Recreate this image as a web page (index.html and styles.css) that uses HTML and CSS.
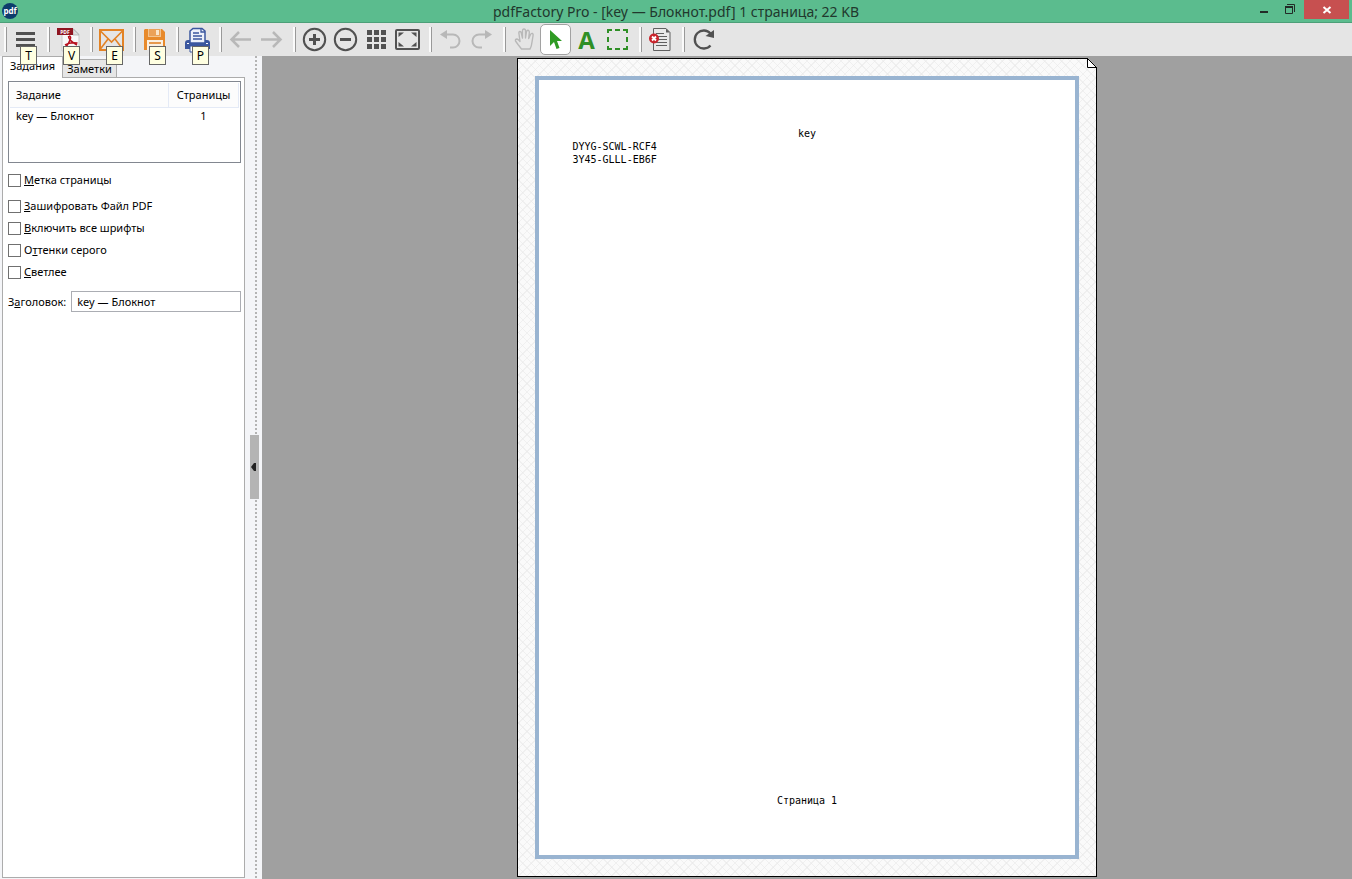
FILE: index.html
```
<!DOCTYPE html>
<html lang="ru">
<head>
<meta charset="utf-8">
<title>pdfFactory Pro</title>
<link rel="stylesheet" href="styles.css">
</head>
<body>
<div class="app">
  <header class="titlebar">
    <div class="app-logo">
      <svg width="18" height="18" viewBox="0 0 18 18"><circle cx="9" cy="9" r="8" fill="#0d3c6b"/><text class="logo-text" x="9" y="12" text-anchor="middle">pdf</text></svg>
    </div>
    <h1 class="title">pdfFactory Pro - [key — Блокнот.pdf] 1 страница; 22 KB</h1>
    <div class="window-controls">
      <button class="win-btn" aria-label="Свернуть"><svg width="10" height="16"><rect x="0" y="9" width="8" height="2" fill="#222b27"/></svg></button>
      <button class="win-btn" aria-label="Восстановить"><svg width="12" height="16" fill="none" stroke="#222b27"><path d="M2 2.500H9.500V10"/><path d="M.5 4V11.500H7.500V5"/><path d="M0 5H8" stroke-width="2"/></svg></button>
      <button class="win-btn win-close" aria-label="Закрыть"><svg width="10" height="10" stroke="#fff" stroke-width="2"><path d="M1.500 2L8.500 8M8.500 2L1.500 8"/></svg></button>
    </div>
  </header>

  <nav class="toolbar">
    <div class="group">
      <button class="tool" aria-label="Меню"><svg width="27" height="27" viewBox="0 0 27 27" fill="#515151"><path d="M4 6h19v3H4zM4 12h19v3H4zM4 18h19v3H4z"/></svg><span class="keytip">T</span></button>
    </div>
    <div class="group">
      <button class="tool" aria-label="PDF"><svg width="27" height="27" viewBox="0 0 27 27"><path d="M7 3H19L24 8V25H7Z" fill="#f8f8f8" stroke="#c9c9c9"/><path d="M18 3V9H24Z" fill="#ddd" stroke="#aaa" stroke-width=".7"/><path d="M2 2H18V9H2Z" fill="#8f1520"/><text class="pdf-text" x="10" y="8" text-anchor="middle">PDF</text><path d="M14 10Q17 10 14.500 15Q12 21 9 22M13.500 10Q13 14 22 19M10 19Q15 16 22.500 17" fill="none" stroke="#b8121f" stroke-width="1.500"/></svg><span class="keytip">V</span></button>
    </div>
    <div class="group">
      <button class="tool" aria-label="Почта"><svg width="27" height="27" viewBox="0 0 27 27" fill="none" stroke="#e38325" stroke-width="2"><rect x="2" y="4" width="23" height="20"/><path d="M2 4.500L13.500 16L25 4.500M2 23.500L10 13M25 23.500L17 13" stroke-width="1.600"/></svg><span class="keytip">E</span></button>
    </div>
    <div class="group">
      <button class="tool" aria-label="Сохранить"><svg width="27" height="27" viewBox="0 0 27 27"><path d="M4 3H21L24 6V24H3V4Z" fill="#e88a2b"/><path d="M7 3H20V11H7Z" fill="#f2c48f"/><path d="M8 3H19V10H8Z" fill="#eba158"/><path d="M15 4H18V9H15Z" fill="#fbe5ca"/><path d="M6 14H22V24H6Z" fill="#faf0e2"/><path d="M8 17H20M8 21H20" stroke="#e07c1d" stroke-width="1.500"/></svg><span class="keytip">S</span></button>
    </div>
    <div class="group">
      <button class="tool" aria-label="Печать"><svg width="27" height="27" viewBox="0 0 27 27"><path d="M1 17Q1 14 4 14H23Q26 14 26 17V23H1Z" fill="#3b579f"/><path d="M6 17V5L9 2.500H18L21 5V17Z" fill="#edf1fa" stroke="#3b579f" stroke-width="1.500"/><path d="M17 2V6H21M9 7H15M9 10H18M9 13H18" fill="none" stroke="#3b579f" stroke-width="1.300"/><path d="M6 20H21V26H6Z" fill="#fff" stroke="#3b579f"/><path d="M3 17.500H5M22 17.500H24" stroke="#fff"/></svg><span class="keytip">P</span></button>
    </div>
    <div class="group">
      <button class="tool" aria-label="Назад"><svg width="27" height="27" viewBox="0 0 27 27" fill="none" stroke="#b8b8b8" stroke-width="2.500"><path d="M4 13.500H24M12 6L4.500 13.500L12 21"/></svg></button>
      <button class="tool" aria-label="Вперёд"><svg width="27" height="27" viewBox="0 0 27 27" fill="none" stroke="#b8b8b8" stroke-width="2.500"><path d="M3 13.500H23M15 6L22.500 13.500L15 21"/></svg></button>
    </div>
    <div class="group">
      <button class="tool" aria-label="Увеличить"><svg width="27" height="27" viewBox="0 0 27 27" fill="none" stroke="#515151"><circle cx="13.500" cy="13.500" r="10.700" stroke-width="2"/><path d="M8 13.500H19M13.500 8V19" stroke-width="3"/></svg></button>
      <button class="tool" aria-label="Уменьшить"><svg width="27" height="27" viewBox="0 0 27 27" fill="none" stroke="#515151"><circle cx="13.500" cy="13.500" r="10.700" stroke-width="2"/><path d="M8 13.500H19" stroke-width="3"/></svg></button>
      <button class="tool" aria-label="Эскизы"><svg width="27" height="27" viewBox="0 0 27 27" fill="#515151"><path d="M4 4h5v5H4zM11 4h5v5h-5zM18 4h5v5h-5zM4 11h5v5H4zM11 11h5v5h-5zM18 11h5v5h-5zM4 18h5v5H4zM11 18h5v5h-5zM18 18h5v5h-5z"/></svg></button>
      <button class="tool" aria-label="По размеру окна"><svg width="27" height="27" viewBox="0 0 27 27"><rect x="2" y="4" width="23" height="19" rx="1" fill="none" stroke="#515151" stroke-width="2"/><path d="M4.500 6.500H10L4.500 11ZM22.500 6.500H17L22.500 11ZM4.500 20.500H10L4.500 16ZM22.500 20.500H17L22.500 16Z" fill="#515151"/></svg></button>
    </div>
    <div class="group">
      <button class="tool" aria-label="Отменить"><svg width="27" height="27" viewBox="0 0 27 27"><path d="M8 8.500H16A6.500 6.500 0 0 1 16 21.500H13" fill="none" stroke="#b8b8b8" stroke-width="2"/><path d="M3 8.500L10 4V13Z" fill="#b8b8b8"/></svg></button>
      <button class="tool" aria-label="Повторить"><svg width="27" height="27" viewBox="0 0 27 27"><path d="M19 8.500H11A6.500 6.500 0 0 0 11 21.500H14" fill="none" stroke="#b8b8b8" stroke-width="2"/><path d="M24 8.500L17 4V13Z" fill="#b8b8b8"/></svg></button>
    </div>
    <div class="group">
      <button class="tool" aria-label="Рука"><svg width="27" height="27" viewBox="0 0 27 27" fill="none" stroke="#b8b8b8" stroke-width="1.400" stroke-linejoin="round"><path d="M9 15.500L8 8Q7.500 5.500 9 5.500Q10.200 5.500 10.500 8L11.500 12V5Q11.500 3 13 3Q14.500 3 14.500 5V12L15.500 5.500Q16 4 17.300 4.300Q18.500 4.700 18.300 6.500L17.700 12.500L19.500 8.500Q20.300 7 21.500 7.500Q22.500 8 22 10L21 16Q20.500 21 19 23H10.500Q9 21 7 18.500L4.500 15Q4 13 6 13Q7.500 13.500 9 15.500Z"/></svg></button>
      <button class="tool selected" aria-label="Выделение"><svg width="27" height="27" viewBox="0 0 27 27"><path d="M8 4V20L12 16L14.500 23L17.500 22L15 15H20Z" fill="#2f9b24"/></svg></button>
      <button class="tool text-tool" aria-label="Текст">A</button>
      <button class="tool" aria-label="Область"><svg width="27" height="27" viewBox="0 0 27 27" fill="none" stroke="#2f8f26" stroke-width="2"><path d="M4 7V4H8M11 4H16M19 4H23V7M23 11V16M23 20V23H19M16 23H11M8 23H4V20M4 16V11"/></svg></button>
    </div>
    <div class="group">
      <button class="tool" aria-label="Удалить страницу"><svg width="27" height="27" viewBox="0 0 27 27"><path d="M6.500 2.500H19L23 6.500V24.500H6.500Z" fill="#e9e9e9" stroke="#606060"/><path d="M19 2.500V6.500H23Z" fill="#606060"/><path d="M9 7.500H17M9 10.500H20M9 13.500H20M9 16.500H20M9 19.500H20" stroke="#606060"/><circle cx="7" cy="12.500" r="5" fill="#c9242c"/><path d="M5 10.500L9 14.500M9 10.500L5 14.500" stroke="#fff" stroke-width="1.800"/></svg></button>
    </div>
    <div class="group">
      <button class="tool" aria-label="Обновить"><svg width="27" height="27" viewBox="0 0 27 27"><path d="M20.500 7.500A9 9 0 1 0 20.500 19.500" fill="none" stroke="#515151" stroke-width="2.300"/><path d="M24 4V12L15.500 10Z" fill="#515151"/></svg></button>
    </div>
  </nav>

  <main class="body">
    <aside class="sidebar">
      <div class="tabs" role="tablist">
        <button class="tab active" role="tab" aria-selected="true">Задания</button>
        <button class="tab" role="tab" aria-selected="false">Заметки</button>
      </div>
      <form class="panel">
        <div class="joblist">
          <table class="jobs">
            <thead><tr><th>Задание</th><th class="pages">Страницы</th></tr></thead>
            <tbody><tr><td>key — Блокнот</td><td class="pages">1</td></tr></tbody>
          </table>
        </div>
        <div class="options">
          <label class="check check-first"><input type="checkbox"><span><u>М</u>етка страницы</span></label>
          <label class="check"><input type="checkbox"><span><u>З</u>ашифровать Файл PDF</span></label>
          <label class="check"><input type="checkbox"><span><u>В</u>ключить все шрифты</span></label>
          <label class="check"><input type="checkbox"><span>О<u>т</u>тенки серого</span></label>
          <label class="check"><input type="checkbox"><span><u>С</u>ветлее</span></label>
        </div>
        <div class="field">
          <label for="doc-title">З<u>а</u>головок:</label>
          <input id="doc-title" class="textbox" type="text" value="key — Блокнот">
        </div>
      </form>
    </aside>
    <div class="splitter">
      <button class="collapse" aria-label="Скрыть панель"><svg width="7" height="8"><path d="M6 0V8H4L1 4L4 0Z" fill="#222"/></svg></button>
    </div>
    <section class="viewer">
      <article class="page">
        <svg class="page-corner" width="10" height="10" viewBox="0 0 10 10"><path d="M0 0H10V10Z" fill="#a0a0a0"/><path d="M.5 0V9.500H10" fill="#fff" stroke="#000"/><path d="M0 0L10 10" stroke="#000"/></svg>
        <div class="sheet">
          <p class="page-head">key</p>
          <p class="page-text">DYYG-SCWL-RCF4<br>3Y45-GLLL-EB6F</p>
          <p class="page-foot">Страница 1</p>
        </div>
      </article>
    </section>
  </main>
</div>
</body>
</html>
```
FILE: styles.css
```
*, *::before { box-sizing: border-box; }
body {
  margin: 0;
  font-family: "Noto Sans", "Open Sans", sans-serif;
  font-size: 11px;
  line-height: 16px;
  color: #000;
}
button, input { font: inherit; color: inherit; }
button { padding: 0; border: 0; background: none; }
p, h1 { margin: 0; }
svg { display: block; }
.app { display: flex; flex-direction: column; height: 100vh; }

.titlebar {
  display: grid;
  grid-template-columns: 1fr auto 1fr;
  height: 23px;
  background: #5bbc8e;
  border-bottom: 1px solid #4c9f78;
}
.app-logo { padding: 2px 1px; }
.logo-text { font: bold 8px "Open Sans", sans-serif; fill: #fff; }
.title { font-size: 14px; line-height: 23px; font-weight: 400; color: #21382d; }
.window-controls { display: flex; justify-content: flex-end; padding-right: 3px; }
.win-btn {
  display: flex;
  align-items: center;
  justify-content: center;
  width: 26px;
  height: 19px;
}
.win-close { width: 45px; background: #c75050; }

.toolbar { display: flex; height: 33px; padding: 1px 4px; background: #e5e5e5; }
.group { display: flex; padding-right: 6px; }
.group::before {
  content: "";
  width: 3px;
  height: 25px;
  margin: 3px 3px 0 0;
  border-left: 2px solid #fbfbfb;
  border-right: 1px solid #999;
}
.tool {
  position: relative;
  display: flex;
  align-items: center;
  justify-content: center;
  width: 31px;
  height: 31px;
}
.tool.selected { background: #fff; border: 1px solid #a2a2a2; border-radius: 5px; }
.text-tool { font: bold 24px "Open Sans", sans-serif; color: #2f8f26; }
.pdf-text { font: bold 5px "Open Sans", sans-serif; fill: #fff; }
.keytip {
  position: absolute;
  z-index: 2;
  left: 10px;
  top: 22px;
  width: 17px;
  height: 19px;
  border: 1px solid #666;
  background: #ffffe1;
  font-size: 12px;
  line-height: 18px;
  text-align: center;
}

.body { display: flex; flex: 1; min-height: 0; background: #f4f5f8; }
.sidebar { display: flex; flex-direction: column; width: 245px; padding: 0 0 1px 2px; }
.tabs { display: flex; align-items: flex-end; height: 21px; }
.tab {
  height: 18px;
  width: 54px;
  border: 1px solid #acacac;
  border-bottom: 0;
  border-left: 0;
  background: #e6e6e6;
  line-height: 16px;
}
.tab.active {
  position: relative;
  z-index: 1;
  width: 61px;
  height: 22px;
  margin-bottom: -1px;
  border-left: 1px solid #acacac;
  background: #fff;
  padding-bottom: 4px;
}
.panel { flex: 1; padding: 3px 3px 0 5px; border: 1px solid #acacac; background: #fff; }
.joblist { height: 82px; padding: 1px; border: 1px solid #828790; }
.jobs { width: 100%; border-collapse: collapse; table-layout: fixed; }
.jobs th, .jobs td { height: 18px; padding: 0 6px; font-weight: 400; text-align: left; }
.jobs th { height: 24px; border-bottom: 1px solid #e4eaf6; border-right: 1px solid #e4eaf6; background: #fcfcfc; }
.jobs .pages { width: 70px; padding: 0; text-align: center; }
.options { padding-top: 6px; }
.check { display: flex; align-items: center; gap: 3px; height: 22px; }
.check-first { margin-bottom: 4px; }
.check input {
  appearance: none;
  width: 13px;
  height: 13px;
  margin: 0;
  border: 1px solid #707070;
  background: #fff;
}
.field { display: flex; align-items: center; gap: 5px; padding-top: 8px; }
.textbox {
  flex: 1;
  min-width: 0;
  height: 21px;
  padding: 0 5px;
  border: 1px solid #abadb3;
  background: #fff;
}

.splitter {
  display: flex;
  align-items: center;
  width: 17px;
  padding: 0 0 2px 5px;
  background: repeating-linear-gradient(#b4b4b4 0 2px, #f4f5f8 2px 4px) 10px 0 / 2px 100% no-repeat;
}
.collapse {
  width: 9px;
  height: 64px;
  background: #b4b4b4;
}

.viewer {
  display: flex;
  justify-content: center;
  flex: 1;
  padding: 2px 0;
  background: #a0a0a0;
}
.page {
  position: relative;
  aspect-ratio: 210 / 297;
  padding: 17px;
  border: 1px solid #000;
  background:
    repeating-linear-gradient(45deg, #e8e8e890 0 1px, transparent 1px 6px),
    repeating-linear-gradient(-45deg, #e8e8e890 0 1px, transparent 1px 6px),
    #fafafa;
}
.page-corner { position: absolute; top: -1px; right: -1px; }
.sheet {
  display: flex;
  flex-direction: column;
  height: 100%;
  padding: 48px 33px;
  border: 4px solid #99b4d1;
  background: #fff;
  font: 10px/13px "DejaVu Sans Mono", monospace;
}
.page-head, .page-foot { text-align: center; line-height: 12px; }
.page-foot { margin-top: auto; }
```
